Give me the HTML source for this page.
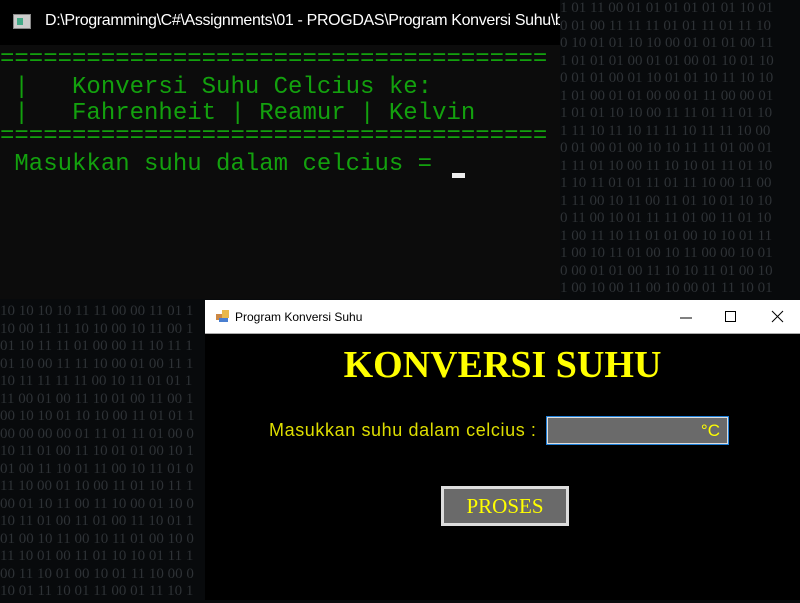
<!DOCTYPE html>
<html><head><meta charset="utf-8"><style>
html,body{margin:0;padding:0}
body{width:800px;height:600px;position:relative;overflow:hidden;background:#080a0c;font-family:"Liberation Sans",sans-serif}
.bin{position:absolute;font-family:"Liberation Serif",serif;font-size:15px;line-height:17.5px;color:#2e3236;white-space:pre;overflow:hidden}
.con{position:absolute;left:0;top:0;width:560px;height:299px;background:#0c0c0c}
.ct{position:absolute;left:0;top:0;width:560px;height:45px;background:#000;color:#fff;font-size:16px;overflow:hidden}
.ct span{position:absolute;left:45px;top:12px;white-space:nowrap;letter-spacing:-0.35px}
.cico{position:absolute;left:13px;top:14px;width:16px;height:13px;background:#ccc;border:1px solid #888}
.cico:after{content:"";position:absolute;left:3px;top:3px;width:6px;height:7px;background:#4a8}
.mono{position:absolute;left:0;font-family:"Liberation Mono",monospace;font-size:24px;color:#13a10e;white-space:pre;line-height:24px}
.cur{position:absolute;left:452px;top:173px;width:13px;height:5px;background:#eee}
.form{position:absolute;left:205px;top:300px;width:595px;height:300px;background:#000}
.ft{position:absolute;left:0;top:0;width:595px;height:33px;background:#fff;border-bottom:1px solid #aaa;font-size:12px;color:#000}
.ft span{position:absolute;left:30px;top:10px}
.h{position:absolute;width:595px;text-align:center;top:343px;font-family:"Liberation Serif",serif;font-weight:bold;font-size:38px;color:#ff0}
.lbl{position:absolute;left:269px;top:420px;font-size:18px;letter-spacing:0.6px;color:#dede00;white-space:nowrap}
.tb{position:absolute;left:546px;top:416px;width:181px;height:27px;background:#6a6a6a;border:1px solid #1e7fd8;box-shadow:inset 0 0 0 1px #ddd;color:#ff0;font-size:17px;text-align:right}
.tb span{position:absolute;right:8px;top:4px}
.btn{position:absolute;left:441px;top:486px;width:122px;height:34px;background:#6a6a6a;border:3px solid #ddd;text-align:center;font-family:"Liberation Serif",serif;font-size:21px;color:#ff0;line-height:34px}
</style></head><body>
<div class="bin" style="left:560px;top:0;width:240px;height:300px">1 01 11 00 01 01 01 01 01 01 10 01
0 01 00 11 11 11 01 01 11 01 11 10
0 10 01 01 10 10 00 01 01 01 00 11
1 01 01 01 00 01 01 00 01 10 01 10
0 01 01 00 01 10 01 01 10 11 10 10
1 01 00 01 01 00 00 01 11 00 00 01
1 01 01 10 10 00 11 11 01 11 01 10
1 11 10 11 10 11 11 10 11 11 10 00
0 01 00 01 00 10 10 11 11 01 00 01
1 11 01 10 00 11 10 10 01 11 01 10
1 10 11 01 01 11 01 11 10 00 11 00
1 11 00 10 11 00 11 01 10 01 10 10
0 11 00 10 01 11 11 01 00 11 01 10
1 00 11 10 11 01 01 00 10 10 01 11
1 00 10 11 01 00 10 11 00 00 10 01
0 00 01 01 00 11 10 10 11 01 00 10
1 00 10 00 11 00 10 00 01 11 10 01</div>
<div class="bin" style="left:0;top:300px;width:205px;height:300px;padding-top:3px">10 10 10 10 11 11 00 00 11 01 1
10 00 11 11 10 10 00 10 11 00 1
01 10 11 11 01 00 00 11 10 11 1
01 10 00 11 11 10 00 01 00 11 1
10 11 11 11 11 00 10 11 01 01 1
11 00 01 00 11 10 01 00 11 00 1
00 10 10 01 10 10 00 11 01 01 1
00 00 00 00 01 11 01 11 01 00 0
10 11 01 00 11 10 01 01 00 10 1
01 00 11 10 01 11 00 10 11 01 0
11 10 00 01 10 00 11 01 10 11 1
00 01 10 11 00 11 10 00 01 10 0
10 11 01 00 11 01 00 11 10 01 1
01 00 10 11 00 10 11 01 00 10 0
11 10 01 00 11 01 10 10 01 11 1
00 11 10 01 00 10 01 11 10 00 0
10 01 11 10 01 11 00 01 11 10 1</div>
<div class="con">
<div class="ct"><div class="cico"></div><span>D:\Programming\C#\Assignments\01 - PROGDAS\Program Konversi Suhu\bin</span></div>
<div class="mono" style="top:48px">======================================</div>
<div class="mono" style="top:76px"> |   Konversi Suhu Celcius ke:</div>
<div class="mono" style="top:102px"> |   Fahrenheit | Reamur | Kelvin</div>
<div class="mono" style="top:125px">======================================</div>
<div class="mono" style="top:153px"> Masukkan suhu dalam celcius = </div>
<div class="cur"></div>
</div>
<div class="form">
<div class="ft">
<svg style="position:absolute;left:11px;top:9px" width="14" height="14"><rect x="0" y="5" width="6" height="6" fill="#c84"/><rect x="6" y="1" width="7" height="8" fill="#e9b84a"/><rect x="3" y="9" width="9" height="4" fill="#4a7fd0"/></svg>
<span>Program Konversi Suhu</span>
<svg style="position:absolute;left:470px;top:10px" width="120" height="14"><line x1="5" y1="8" x2="17" y2="8" stroke="#000"/><rect x="50.5" y="1.5" width="10" height="10" fill="none" stroke="#000"/><path d="M97 1 L108 12 M108 1 L97 12" stroke="#000"/></svg>
</div>
</div>
<div class="h" style="left:205px">KONVERSI SUHU</div>
<div class="lbl">Masukkan suhu dalam celcius :</div>
<div class="tb"><span>°C</span></div>
<div class="btn">PROSES</div>
</body></html>
